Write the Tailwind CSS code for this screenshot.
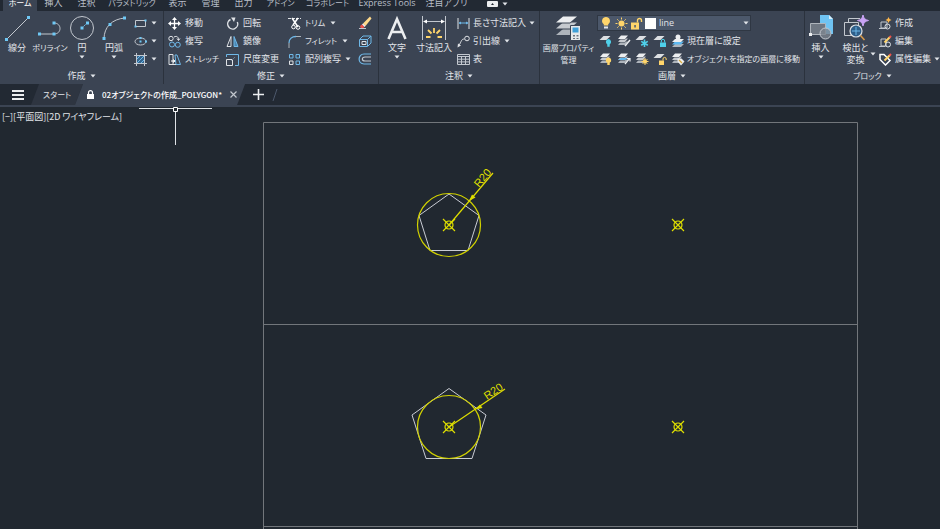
<!DOCTYPE html>
<html lang="ja">
<head>
    <meta charset="UTF-8">
    <meta name="viewport" content="width=device-width, initial-scale=1.0">
    <title>02オブジェクトの作成_POLYGON</title>
    <script src="https://cdn.jsdelivr.net/npm/@tailwindcss/browser@4"></script>
</head>
<body class="flex flex-col h-screen overflow-hidden bg-[#212830] text-[#e2e5ea] text-[9px] leading-3 whitespace-nowrap font-['Open_Sans','Noto_Sans_CJK_JP',sans-serif] [font-feature-settings:'palt']">

    <!-- shared icon parts -->
    <svg class="hidden">
        <symbol id="caret" viewBox="0 0 6 4"><path d="M0.5 0.5h5L3 3.5z" fill="#e2e5ea"/></symbol>
        <symbol id="sheet" viewBox="0 0 14 14"><path d="M0.500 6L4.500 2H11.500L7.500 6z" fill="#dcdfe2"/></symbol>
        <symbol id="sheets" viewBox="0 0 14 14">
            <path d="M1 11L4 7.500H11L8 11z" fill="#aeb4bb"/>
            <path d="M1 8.500L4 5H11L8 8.500z" fill="#3b4453"/>
            <path d="M1 8L4 4.500H11L8 8z" fill="#c6cacf"/>
            <path d="M1 5.500L4 2H11L8 5.500z" fill="#3b4453"/>
            <path d="M1 5L4 1.500H11L8 5z" fill="#eceef0"/>
        </symbol>
        <symbol id="bulb" viewBox="0 0 14 14"><path d="M7 1a4 4 0 0 1 2.200 7.300V9.500H4.800V8.300A4 4 0 0 1 7 1z" fill="#ffd56b"/><path d="M5 10.500h4v2H5z" fill="#e2e5ea"/></symbol>
        <symbol id="point" viewBox="-7 -7 14 14"><path d="M-6 -6L6 6M-6 6L6 -6" stroke="#dede00" stroke-width="1.200"/><circle r="4" fill="none" stroke="#dede00" stroke-width="1.200"/></symbol>
    </svg>

    <nav class="flex h-[11px] items-end overflow-hidden bg-[#222933] pl-[3px] text-[#b9bfc8]">
        <a href="#" class="w-[34px] bg-[#3b4453] pb-[2px] text-center text-[8px] text-white">ホーム</a>
        <a href="#" class="w-[33px] pb-[2px] text-center">挿入</a>
        <a href="#" class="w-[33px] pb-[2px] text-center">注釈</a>
        <a href="#" class="w-[58px] pb-[2px] text-center text-[8px]">パラメトリック</a>
        <a href="#" class="w-[33px] pb-[2px] text-center">表示</a>
        <a href="#" class="w-[33px] pb-[2px] text-center">管理</a>
        <a href="#" class="w-[33px] pb-[2px] text-center">出力</a>
        <a href="#" class="w-[41px] pb-[2px] text-center text-[8px]">アドイン</a>
        <a href="#" class="w-[53px] pb-[2px] text-center text-[8px]">コラボレート</a>
        <a href="#" class="w-[66px] pb-[2px] text-center">Express Tools</a>
        <a href="#" class="w-[53px] pb-[2px] text-center">注目アプリ</a>
        <button class="ml-[14px] flex items-center gap-1 pb-1" aria-label="リボン表示">
            <svg class="h-[6px] w-[11px]" viewBox="0 0 11 6"><rect width="11" height="6" rx="1" fill="#eceef0"/><path d="M4 4l1.500-2L7 4z" fill="#222933"/></svg>
            <svg class="h-1 w-[6px]"><use href="#caret"/></svg>
        </button>
    </nav>

    <header class="grid grid-cols-[minmax(0,164fr)_minmax(0,215fr)_minmax(0,161fr)_minmax(0,265fr)_minmax(0,135fr)] bg-[#3b4453]">

        <!-- 作成 -->
        <section class="flex flex-col border-r border-[#2b323d] pt-[3px]">
            <div class="grid h-[54px] grid-cols-[34px_32px_32px_32px_1fr]">
                <button class="flex flex-col items-center">
                    <svg class="h-7 w-7 shrink-0" viewBox="0 0 28 28" fill="none"><path d="M4 25L25 4" stroke="#c3c8cf"/><path d="M2 24h3v3H2zM24 2h3v3h-3z" fill="#6fc8f5"/></svg>
                    <span>線分</span>
                </button>
                <button class="flex flex-col items-center">
                    <svg class="h-7 w-7 shrink-0" viewBox="0 0 28 28" fill="none"><path d="M3 20H18M18 9c8 0 8 11 0 11" stroke="#c3c8cf"/><path d="M2 18.500h3v3H2zM16.500 18.500h3v3h-3zM16.500 7.500h3v3h-3z" fill="#6fc8f5"/></svg>
                    <span class="text-[8px]">ポリライン</span>
                </button>
                <button class="flex flex-col items-center">
                    <svg class="h-7 w-7 shrink-0" viewBox="0 0 28 28" fill="none"><circle cx="14" cy="14" r="11.500" stroke="#c3c8cf"/><path d="M14 14L19 9" stroke="#6fc8f5" stroke-dasharray="2 1"/><path d="M12.500 12.500h3v3h-3zM18 7.500h3v3h-3z" fill="#6fc8f5"/></svg>
                    <span>円</span>
                    <svg class="mt-px h-1 w-[6px]"><use href="#caret"/></svg>
                </button>
                <button class="flex flex-col items-center">
                    <svg class="h-7 w-7 shrink-0" viewBox="0 0 28 28" fill="none"><path d="M4 25C4 13 12 5 25 4" stroke="#c3c8cf"/><path d="M2.500 23h3v3h-3zM8.500 9h3v3h-3zM23 2.500h3v3h-3z" fill="#6fc8f5"/></svg>
                    <span>円弧</span>
                    <svg class="mt-px h-1 w-[6px]"><use href="#caret"/></svg>
                </button>
                <div class="grid grid-rows-3 pl-1">
                    <button class="flex items-center gap-1" aria-label="長方形">
                        <svg class="size-[13px]" viewBox="0 0 13 13" fill="none"><path d="M1.500 3.500h10v6h-10z" stroke="#c3c8cf"/><path d="M0.500 8.500h2v2h-2zM10.500 2.500h2v2h-2z" fill="#6fc8f5"/></svg>
                        <svg class="h-1 w-[6px]"><use href="#caret"/></svg>
                    </button>
                    <button class="flex items-center gap-1" aria-label="楕円">
                        <svg class="size-[13px]" viewBox="0 0 13 13" fill="none"><ellipse cx="6.500" cy="6.500" rx="5.500" ry="3.500" stroke="#c3c8cf"/><path d="M5.500 5.500h2v2h-2zM5.500 2h2v2h-2zM11 5.500h2v2h-2z" fill="#6fc8f5"/></svg>
                        <svg class="h-1 w-[6px]"><use href="#caret"/></svg>
                    </button>
                    <button class="flex items-center gap-1" aria-label="ハッチング">
                        <svg class="size-[13px]" viewBox="0 0 13 13" fill="none"><path d="M3 3h7v7H3z" fill="#34658d"/><path d="M3 6l3-3M3 10l7-7M7 10l3-3" stroke="#6fb8e8"/><path d="M2.500 0v13M10.500 0v13M0 2.500h13M0 10.500h13" stroke="#c3c8cf"/></svg>
                        <svg class="h-1 w-[6px]"><use href="#caret"/></svg>
                    </button>
                </div>
            </div>
            <button class="flex h-4 items-center justify-center gap-1">作成 <svg class="h-1 w-[6px]"><use href="#caret"/></svg></button>
        </section>

        <!-- 修正 -->
        <section class="flex flex-col border-r border-[#2b323d] pt-[3px]">
            <div class="grid h-[54px] grid-flow-col grid-cols-[58px_62px_70px_1fr] grid-rows-3 pl-1">
                <button class="flex items-center gap-1">
                    <svg class="size-[13px] shrink-0" viewBox="0 0 13 13"><path d="M6.500 2v9M2 6.500h9" stroke="#fff" stroke-width="1.300"/><path d="M6.500 0L9 3H4zM6.500 13L9 10H4zM0 6.500L3 4v5zM13 6.500L10 4v5z" fill="#fff"/></svg>移動
                </button>
                <button class="flex items-center gap-1">
                    <svg class="size-[13px] shrink-0" viewBox="0 0 13 13" fill="none"><circle cx="3" cy="3.500" r="2.200" stroke="#dfe2e6"/><path d="M6 2c3-1.500 4.500 0 4.500 3M9 3.500l1.500 2L12 3.500" stroke="#dfe2e6"/><circle cx="4" cy="9.500" r="2.500" stroke="#6fb8e8"/><circle cx="9.800" cy="9.800" r="2.500" stroke="#6fb8e8"/></svg>複写
                </button>
                <button class="flex items-center gap-1 text-[8px]">
                    <svg class="size-[13px] shrink-0" viewBox="0 0 13 13" fill="none"><path d="M1 1.500h4v10H1zM5 8h3M5 11.500h3" stroke="#dfe2e6"/><path d="M3 8h3M5 6.500L7 8 5 9.500" stroke="#fff"/><path d="M7 2l2 0 3.500 9.500H8z" stroke="#6fb8e8"/></svg>ストレッチ
                </button>
                <button class="flex items-center gap-1">
                    <svg class="size-[13px] shrink-0" viewBox="0 0 13 13" fill="none"><path d="M4.500 2.500A5 5 0 1 0 11.300 5" stroke="#dfe2e6" stroke-width="1.400"/><path d="M5 0.500h4.500L8 5z" fill="#dfe2e6"/></svg>回転
                </button>
                <button class="flex items-center gap-1">
                    <svg class="size-[13px] shrink-0" viewBox="0 0 13 13" fill="none"><path d="M5 1.500v10H1z" stroke="#dfe2e6"/><path d="M8 1.500v10h4z" fill="#4b86b3" stroke="#6fb8e8"/></svg>鏡像
                </button>
                <button class="flex items-center gap-1">
                    <svg class="size-[13px] shrink-0" viewBox="0 0 13 13" fill="none"><path d="M.5 4V1.500h12v11H9" stroke="#6fb8e8"/><path d="M.5 6.500h6v6h-6z" stroke="#dfe2e6"/><path d="M5 8l4-4" stroke="#6d7b8c"/></svg>尺度変更
                </button>
                <button class="flex items-center gap-1">
                    <svg class="size-[13px] shrink-0" viewBox="0 0 13 13" fill="none"><path d="M0 1.500h13" stroke="#dfe2e6" stroke-dasharray="3 1"/><path d="M4 1l6 9M10 1L5 8" stroke="#fff" stroke-width="1.500"/><circle cx="5.500" cy="10" r="1.800" stroke="#fff"/><circle cx="10" cy="10.500" r="1.800" stroke="#fff"/></svg><span class="text-[8px]">トリム</span>
                    <svg class="ml-px h-1 w-[6px] shrink-0"><use href="#caret"/></svg>
                </button>
                <button class="flex items-center gap-1">
                    <svg class="size-[13px] shrink-0" viewBox="0 0 13 13" fill="none"><path d="M1 8C1 4 4 1.500 8 1.500" stroke="#6fb8e8" stroke-width="1.300"/><path d="M8 1.500h5M1 8v5" stroke="#aeb4bb"/></svg><span class="text-[8px]">フィレット</span>
                    <svg class="ml-px h-1 w-[6px] shrink-0"><use href="#caret"/></svg>
                </button>
                <button class="flex items-center gap-1">
                    <svg class="size-[13px] shrink-0" viewBox="0 0 13 13" fill="none"><path d="M1.500 1.500h3.500v3.500H1.500zM8 1.500h3.500v3.500H8zM8 8h3.500v3.500H8z" stroke="#6fb8e8"/><path d="M1.500 8h3.500v3.500H1.500z" stroke="#dfe2e6"/></svg>配列複写
                    <svg class="h-1 w-[6px] shrink-0"><use href="#caret"/></svg>
                </button>
                <button class="flex items-center" aria-label="削除">
                    <svg class="size-[14px]" viewBox="0 0 14 14"><path d="M12 0.500l1.500 2L7.500 10 5 7.500z" fill="#ffd98a"/><path d="M5 7.500L7.500 10l-1 1L4 8.500z" fill="#fff"/><path d="M4 8.500L6.500 11c-1.500 1.500-3 1.500-4 .5s0-2.300 1.500-3z" fill="#f0524a"/><path d="M1 12.500h7" stroke="#c3c8cf"/></svg>
                </button>
                <button class="flex items-center" aria-label="分解">
                    <svg class="size-[14px]" viewBox="0 0 14 14" fill="none"><path d="M2 5l3-3h8v7l-3 3" stroke="#6fb8e8"/><path d="M1.500 5.500h8v7h-8z" stroke="#6fb8e8"/><path d="M9.500 5.500L13 2" stroke="#6fb8e8"/><path d="M4 7.500h4v3H4z" stroke="#dfe2e6"/></svg>
                </button>
                <button class="flex items-center" aria-label="オフセット">
                    <svg class="size-[14px]" viewBox="0 0 14 14" fill="none"><path d="M13 2H6C-.5 2-.5 12 6 12h7" stroke="#6fb8e8" stroke-width="1.200"/><path d="M13 5H7C3.500 5 3.500 9 7 9h6" stroke="#c3c8cf" stroke-width="1.200"/></svg>
                </button>
            </div>
            <button class="flex h-4 items-center justify-center gap-1">修正 <svg class="h-1 w-[6px]"><use href="#caret"/></svg></button>
        </section>

        <!-- 注釈 -->
        <section class="flex flex-col border-r border-[#2b323d] pt-[3px]">
            <div class="grid h-[54px] grid-cols-[36px_38px_1fr]">
                <button class="flex flex-col items-center">
                    <svg class="h-7 w-7 shrink-0" viewBox="0 0 28 28" fill="none"><path d="M5.500 25L14 5l8.500 20M8.500 18h11" stroke="#eceef0" stroke-width="2.600"/></svg>
                    <span>文字</span>
                    <svg class="mt-px h-1 w-[6px]"><use href="#caret"/></svg>
                </button>
                <button class="flex flex-col items-center">
                    <svg class="h-7 w-7 shrink-0" viewBox="0 0 28 28" fill="none"><path d="M2.500 2v24M25.500 2v24M4 7.500h20" stroke="#c3c8cf"/><path d="M3 7.500L7 5.500v4zM25 7.500L21 5.500v4z" fill="#fff"/><path d="M14 14v5M8 16l3.500 3.500M20 16l-3.500 3.500M6 23h4.500M22 23h-4.500" stroke="#ffd56b" stroke-width="1.800"/></svg>
                    <span>寸法記入</span>
                </button>
                <div class="grid grid-rows-3 pl-1">
                    <button class="flex items-center gap-[3px]">
                        <svg class="size-[13px] shrink-0" viewBox="0 0 13 13" fill="none"><path d="M1 1v11M12 1v11" stroke="#dfe2e6"/><path d="M2 6h9" stroke="#6fb8e8"/><path d="M1.500 6L4 4.500v3zM11.500 6L9 4.500v3z" fill="#6fb8e8"/></svg>長さ寸法記入
                        <svg class="h-1 w-[6px] shrink-0"><use href="#caret"/></svg>
                    </button>
                    <button class="flex items-center gap-[3px]">
                        <svg class="size-[13px] shrink-0" viewBox="0 0 13 13" fill="none"><circle cx="10" cy="3.500" r="2.300" stroke="#dfe2e6"/><path d="M7.500 4C4 4 5 6 1.500 11" stroke="#dfe2e6"/><path d="M0.500 12.500L1 8.500l3 2z" fill="#dfe2e6"/></svg>引出線
                        <svg class="ml-px h-1 w-[6px]"><use href="#caret"/></svg>
                    </button>
                    <button class="flex items-center gap-[3px]">
                        <svg class="size-[13px] shrink-0" viewBox="0 0 13 13" fill="none"><path d="M.5 1.500h12v10H.5zM.5 3.500h12M.5 6.200h12M.5 8.900h12M4.500 4v7.500M8.500 4v7.500" stroke="#c3c8cf"/></svg>表
                    </button>
                </div>
            </div>
            <button class="flex h-4 items-center justify-center gap-1">注釈 <svg class="h-1 w-[6px]"><use href="#caret"/></svg></button>
        </section>

        <!-- 画層 -->
        <section class="flex flex-col border-r border-[#2b323d] pt-[3px]">
            <div class="grid h-[54px] grid-cols-[57px_minmax(0,1fr)]">
                <button class="flex flex-col items-center">
                    <svg class="h-7 w-7 shrink-0" viewBox="0 0 28 28"><path d="M1 21l7-6h14l-7 6z" fill="#aeb4bb"/><path d="M1 15.500l7-6h14l-7 6z" fill="#3b4453"/><path d="M1 14.500l7-6h14l-7 6z" fill="#c6cacf"/><path d="M1 9.500l7-6h14l-7 6z" fill="#3b4453"/><path d="M1 8.500l7-6h14l-7 6z" fill="#eceef0"/><path d="M15.500 11.500h10v15h-10z" fill="#e5e7ea" stroke="#3b4453"/><path d="M17.500 13.500h6v5h-6z" fill="#3f9fd8"/><path d="M18 21h2v1.500h-2zM21.500 21h2v1.500h-2zM18 24h2v1h-2zM21.500 24h2v1h-2z" fill="#6b7480"/></svg>
                    <span class="text-center text-[8px]">画層プロパティ<br>管理</span>
                </button>
                <div class="grid grid-rows-3">
                    <div class="mr-[53px] flex h-4 items-center gap-[2px] self-center border border-[#2f3743] bg-[#4c586b] px-px">
                        <svg class="size-[14px]"><use href="#bulb"/></svg>
                        <svg class="size-[13px]" viewBox="0 0 13 13"><circle cx="6.500" cy="6.500" r="3" fill="#ffd56b"/><path d="M6.500 0.500v2M6.500 10.500v2M.5 6.500h2M10.500 6.500h2M2.300 2.300l1.300 1.300M9.400 9.400l1.300 1.300M10.700 2.300L9.400 3.600M3.600 9.400l-1.300 1.300" stroke="#ffd56b"/></svg>
                        <svg class="size-[13px]" viewBox="0 0 13 13"><path d="M1 5.500h8v7H1z" fill="#ffd56b"/><path d="M7.500 5.500V3.500a2 2 0 0 1 4 0V5" fill="none" stroke="#ffd56b" stroke-width="1.400"/><path d="M4.300 8h1.500v2.500H4.300z" fill="#4c586b"/></svg>
                        <span class="size-[11px] bg-white"></span>
                        <select aria-label="画層" class="ml-px min-w-0 flex-1 appearance-none bg-transparent leading-3 text-[#e2e5ea]"><option>line</option></select>
                        <svg class="h-1 w-[6px]"><use href="#caret"/></svg>
                    </div>
                    <div class="flex items-center gap-1 pl-[2px]">
                        <button aria-label="非表示"><svg class="block size-[14px]" viewBox="0 0 14 14"><use href="#sheet"/><path d="M9.500 5a3 3 0 0 1 1.200 5.500v2.200H8.300v-2.200A3 3 0 0 1 9.500 5z" fill="#4fd0ea"/></svg></button>
                        <button aria-label="選択表示"><svg class="block size-[14px]" viewBox="0 0 14 14"><use href="#sheets"/><path d="M13 6L8 12" stroke="#eceef0" stroke-width="1.400"/></svg></button>
                        <button aria-label="フリーズ"><svg class="block size-[14px]" viewBox="0 0 14 14"><use href="#sheet"/><path d="M9.500 5.500v7.500M6.200 7.400l6.600 3.800M12.800 7.400l-6.600 3.800" stroke="#4fd0ea" stroke-width="1.600"/></svg></button>
                        <button aria-label="ロック"><svg class="block size-[14px]" viewBox="0 0 14 14"><use href="#sheet"/><path d="M7 8.500h6v4.500H7z" fill="#4fd0ea"/><path d="M8.300 8.500V7a1.700 1.700 0 0 1 3.400 0v1.500" fill="none" stroke="#4fd0ea"/></svg></button>
                        <button class="flex items-center gap-[2px]"><svg class="size-[14px] shrink-0" viewBox="0 0 14 14"><path d="M1 13l3-3h9l-3 3z" fill="#aeb4bb"/><path d="M1 10.500l3-3h9l-3 3z" fill="#5db7ee"/><path d="M1 8l3-3h9l-3 3z" fill="#eceef0"/><circle cx="7" cy="3" r="2.500" fill="#eceef0"/></svg>現在層に設定</button>
                    </div>
                    <div class="flex items-center gap-1 pl-[2px]">
                        <button aria-label="全画層表示"><svg class="block size-[14px]" viewBox="0 0 14 14"><use href="#sheets"/><path d="M9.500 5.500a2.800 2.800 0 0 1 1.200 5.300v2.200H8.300v-2.200a2.800 2.800 0 0 1 1.200-5.300z" fill="#ffd56b"/></svg></button>
                        <button aria-label="選択表示解除"><svg class="block size-[14px]" viewBox="0 0 14 14"><use href="#sheets"/><path d="M1 8L4 6H11L8 8z" fill="#5db7ee"/><path d="M12.500 6.500L8 12M10 6.500h3v3" fill="none" stroke="#eceef0" stroke-width="1.200"/></svg></button>
                        <button aria-label="フリーズ解除"><svg class="block size-[14px]" viewBox="0 0 14 14"><use href="#sheets"/><circle cx="10" cy="9.500" r="2" fill="#ffd56b"/><path d="M10 6v7M6.500 9.500h7M7.600 7.100l4.800 4.800M12.400 7.100l-4.800 4.800" stroke="#ffd56b"/></svg></button>
                        <button aria-label="ロック解除"><svg class="block size-[14px]" viewBox="0 0 14 14"><use href="#sheet"/><path d="M6 8.500h5v4.500H6z" fill="#ffd56b"/><path d="M10 8.500V7a1.600 1.600 0 0 1 3.200 0v1" fill="none" stroke="#ffd56b"/></svg></button>
                        <button class="flex items-center gap-[2px] text-[8px]"><svg class="size-[14px] shrink-0" viewBox="0 0 14 14"><use href="#sheets"/><path d="M6.500 6.500h4L13.500 9.500l-3.500 4-3.500-4z" fill="#eceef0"/><path d="M8 8l3 3" stroke="#d8a93a" stroke-width="1.300"/></svg>オブジェクトを指定の画層に移動</button>
                    </div>
                </div>
            </div>
            <button class="flex h-4 items-center justify-center gap-1">画層 <svg class="h-1 w-[6px]"><use href="#caret"/></svg></button>
        </section>

        <!-- ブロック -->
        <section class="flex flex-col pt-[3px]">
            <div class="grid h-[54px] grid-cols-[31px_39px_1fr]">
                <button class="flex flex-col items-center">
                    <svg class="h-7 w-7 shrink-0" viewBox="0 0 28 28"><path d="M13 1h9l4 4v15H13z" fill="#6fc3f2"/><path d="M22 1l4 4h-4z" fill="#d8effb"/><path d="M3.500 9.500h15v11h-15z" fill="#6f7782" stroke="#aeb4bb"/><circle cx="18.500" cy="19.500" r="5.500" fill="#7d858f" fill-opacity=".8" stroke="#c3c8cf"/><path d="M2 19h3v3H2z" fill="#eceef0"/></svg>
                    <span>挿入</span>
                    <svg class="mt-px h-1 w-[6px]"><use href="#caret"/></svg>
                </button>
                <button class="flex flex-col items-center">
                    <svg class="h-7 w-7 shrink-0" viewBox="0 0 28 28" fill="none"><path d="M6.500 8V4.500H18M2.500 8.500h14v13h-14z" stroke="#c3c8cf"/><circle cx="14" cy="17" r="6" fill="#2f5f8a" stroke="#dfe2e6" stroke-width="1.200"/><path d="M10 17h8M14 13v8" stroke="#6fb8e8"/><path d="M18.500 21.500l4 4.500" stroke="#d79a4a" stroke-width="1.600"/><path d="M21 1c.8 3.500 2 4.700 5.500 5.500-3.500.8-4.700 2-5.500 5.500-.8-3.500-2-4.700-5.500-5.500C19 5.700 20.200 4.500 21 1z" fill="#c9a3f5" stroke="#c9a3f5"/></svg>
                    <span class="flex items-center gap-[2px] pl-2 text-center"><span>検出と<br>変換</span><svg class="h-1 w-[6px]"><use href="#caret"/></svg></span>
                </button>
                <div class="grid grid-rows-3 pl-1">
                    <button class="flex items-center gap-[3px]">
                        <svg class="size-[13px] shrink-0" viewBox="0 0 13 13" fill="none"><path d="M2 5h6v6H2zM0 11.500h6" stroke="#c3c8cf"/><circle cx="8.500" cy="9.500" r="2.500" stroke="#dfe2e6"/><path d="M9.500 0l1 2 2 1-2 1-1 2-1-2-2-1 2-1z" fill="#ffb84d"/></svg>作成
                    </button>
                    <button class="flex items-center gap-[3px]">
                        <svg class="size-[13px] shrink-0" viewBox="0 0 13 13" fill="none"><path d="M2 4h5v7H2zM0 11.500h6" stroke="#c3c8cf"/><circle cx="9" cy="9.500" r="2.500" stroke="#dfe2e6"/><path d="M5.500 7.500L11 2" stroke="#ffd56b" stroke-width="2"/><path d="M10.500 2.500L12 1" stroke="#f0524a" stroke-width="2"/></svg>編集
                    </button>
                    <button class="flex items-center gap-[3px]">
                        <svg class="size-[13px] shrink-0" viewBox="0 0 13 13" fill="none"><path d="M1 1.500h4l6 6-4.500 4.500L1 6.500z" stroke="#fff" stroke-width="1.500"/><path d="M5.500 7.500L11 2" stroke="#ffd56b" stroke-width="2"/><path d="M10.500 2.500L12 1" stroke="#f0524a" stroke-width="2"/></svg>属性編集
                        <svg class="h-1 w-[6px] shrink-0"><use href="#caret"/></svg>
                    </button>
                </div>
            </div>
            <button class="flex h-4 items-center justify-center gap-1 text-[8px]">ブロック <svg class="h-1 w-[6px]"><use href="#caret"/></svg></button>
        </section>
    </header>

    <!-- file tabs -->
    <div class="flex h-[23px] items-center border-b-2 border-[#3b4453] bg-[#222933] text-[8px]">
        <button class="ml-3 flex w-[12px] flex-col gap-[2px]" aria-label="メニュー">
            <span class="h-[2px] bg-[#eceef0]"></span>
            <span class="h-[2px] bg-[#eceef0]"></span>
            <span class="h-[2px] bg-[#eceef0]"></span>
        </button>
        <a href="#" class="ml-[7px] flex h-full w-[52px] items-center bg-[#2e3541] pl-3 [clip-path:polygon(8px_0,100%_0,calc(100%-8px)_100%,0_100%)]">スタート</a>
        <div class="-ml-[8px] flex h-full items-center bg-[#3b4453] pl-3 pr-2 font-['Noto_Sans_CJK_JP',sans-serif] font-medium text-white [clip-path:polygon(8px_0,100%_0,calc(100%-8px)_100%,0_100%)]">
            <svg class="h-[10px] w-[7px]" viewBox="0 0 7 10"><path d="M0 4h7v5H0z" fill="#fff"/><path d="M1.500 4V2.700a2 2 0 0 1 4 0V4" fill="none" stroke="#fff" stroke-width="1.200"/></svg>
            <a href="#" class="ml-2">02オブジェクトの作成_POLYGON*</a>
            <button class="ml-2" aria-label="閉じる"><svg class="block size-[7px]" viewBox="0 0 7 7"><path d="M.5.5l6 6M6.500.5l-6 6" stroke="#c3c8cf" stroke-width="1.200"/></svg></button>
        </div>
        <button class="ml-2" aria-label="新規図面"><svg class="block size-[11px]" viewBox="0 0 11 11"><path d="M5.500 0v11M0 5.500h11" stroke="#eceef0" stroke-width="1.600"/></svg></button>
        <svg class="ml-2 h-3 w-[6px]" viewBox="0 0 6 12"><path d="M5 0L1 12" stroke="#4c586b"/></svg>
    </div>

    <!-- drawing area -->
    <main class="relative min-h-0 flex-1 overflow-hidden bg-[#212830]">
        <svg class="absolute inset-0 size-full" viewBox="0 0 940 422" preserveAspectRatio="xMinYMin slice" fill="none">
            <path d="M263.500 422V15.500h594V422M263.500 217.500h594M263.500 419.500h594" stroke="#72767b"/>

            <path d="M449 87l30 21.500L468 143.500H430L419 108.500z" stroke="#c9ccd4"/>
            <circle cx="449" cy="118" r="31.500" stroke="#d2d200" stroke-width="1.200"/>
            <path d="M449 118L493 66" stroke="#dede00" stroke-width="1.200"/>
            <path d="M469 94l3-6.500 3.500 3z" fill="#dede00"/>
            <text transform="translate(479 81) rotate(-50)" font-size="11" font-family="Liberation Sans" fill="#dede00">R20</text>
            <use href="#point" x="442" y="111" width="14" height="14"/>

            <path d="M449 281.500l37 26.500L472 351.500H426L412 308z" stroke="#c9ccd4"/>
            <circle cx="449" cy="320" r="31.500" stroke="#d2d200" stroke-width="1.200"/>
            <path d="M449 320L505 282" stroke="#dede00" stroke-width="1.200"/>
            <path d="M475 302.500l5-5 2.500 3.500z" fill="#dede00"/>
            <text transform="translate(487 293) rotate(-34)" font-size="11" font-family="Liberation Sans" fill="#dede00">R20</text>
            <use href="#point" x="442" y="313" width="14" height="14"/>

            <use href="#point" x="671" y="111" width="14" height="14"/>
            <use href="#point" x="671" y="313" width="14" height="14"/>

            <!-- cursor -->
            <path d="M139 1.500h34M178 1.500h34M175.500 5v33" stroke="#dfe2e6"/>
            <path d="M173.500 .5h4v4h-4z" stroke="#fff"/>
        </svg>
        <div class="relative flex pl-[2px] pt-1 font-['Noto_Sans_CJK_JP',sans-serif]">
            <button>[−]</button><button>[平面図]</button><button>[2D ワイヤフレーム]</button>
        </div>
    </main>

</body>
</html>
